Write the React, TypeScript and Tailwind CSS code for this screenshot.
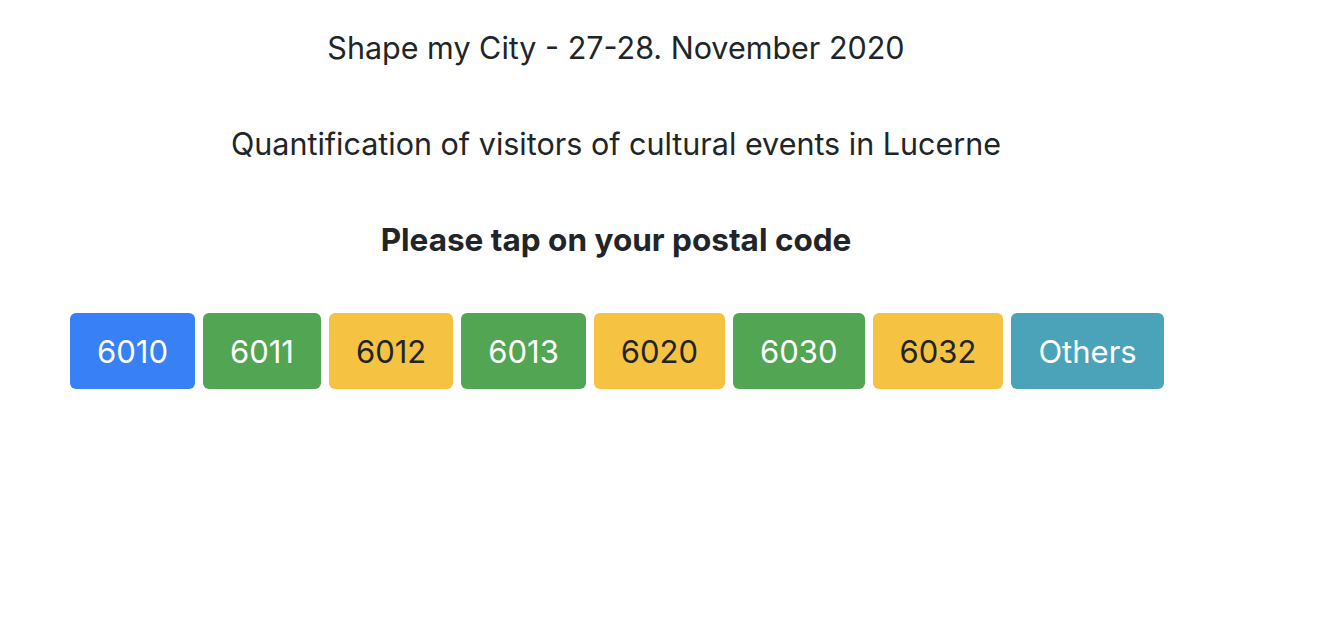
const codes = [
  { label: "6010", cls: "bg-[#3880f6] text-white" },
  { label: "6011", cls: "bg-[#52a552] text-white" },
  { label: "6012", cls: "bg-[#f5c242] text-[#212529]" },
  { label: "6013", cls: "bg-[#52a552] text-white" },
  { label: "6020", cls: "bg-[#f5c242] text-[#212529]" },
  { label: "6030", cls: "bg-[#52a552] text-white" },
  { label: "6032", cls: "bg-[#f5c242] text-[#212529]" },
  { label: "Others", cls: "bg-[#4aa3b8] text-white" },
]

export default function App() {
  return (
    <div className="w-full h-screen bg-white text-[#212529] font-['Inter',sans-serif]">
      <div className="w-[1232px] flex flex-col">
        <h1 className="text-center text-[30.5px] leading-[42px] pt-[27px]">Shape my City - 27-28. November 2020</h1>
        <h2 className="text-center text-[30.5px] leading-[42px] mt-[54px]">Quantification of visitors of cultural events in Lucerne</h2>
        <h3 className="text-center text-[31.5px] leading-[42px] font-bold mt-[54px]">Please tap on your postal code</h3>

        <div className="flex gap-2 pl-[70px] mt-[52px]">
          {codes.map((c) => (
            <button key={c.label} type="button" className={`h-[76px] px-[27px] rounded-md text-[31px] leading-none ${c.cls}`}>
              {c.label}
            </button>
          ))}
        </div>
      </div>
    </div>
  )
}
